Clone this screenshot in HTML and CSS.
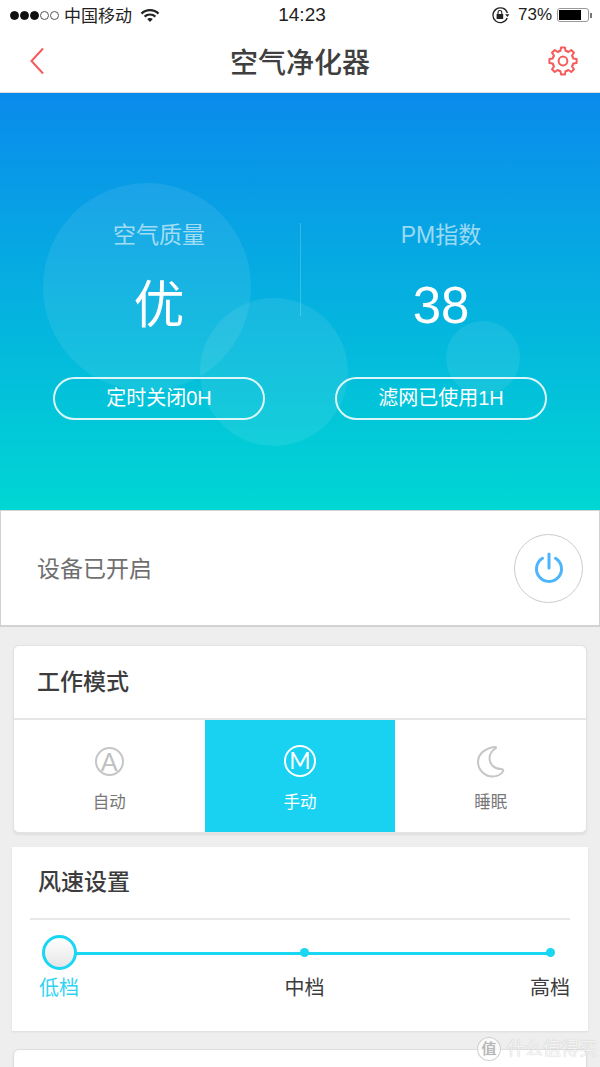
FILE: index.html
```html
<!DOCTYPE html>
<html lang="zh-CN">
<head>
  <meta charset="UTF-8">
  <title>空气净化器</title>
  <link rel="stylesheet" href="styles.css">
</head>
<body>
  <div class="status-bar">
    <div class="status-left">
      <span class="dots">
        <i class="dot on"></i><i class="dot on"></i><i class="dot on"></i><i class="dot"></i><i class="dot"></i>
      </span>
      <span class="carrier">中国移动</span>
      <svg class="wifi" width="20" height="15" viewBox="0 0 20 15">
        <path d="M1.5 5.6C6.2 1 13.8 1 18.5 5.6M4.6 8.6C7.6 5.8 12.4 5.8 15.4 8.6" fill="none" stroke="#222" stroke-width="2.2"/>
        <path d="M7.2 11 C8.8 9.7 11.2 9.7 12.8 11 L10 14 Z" fill="#222"/>
      </svg>
    </div>
    <div class="clock">14:23</div>
    <div class="status-right">
      <svg class="lock" width="19" height="18" viewBox="0 0 19 18">
        <path d="M16.4 7A7.4 7.4 0 1 0 16.2 12" fill="none" stroke="#222" stroke-width="1.3"/>
        <path d="M14.2 8.2H18.4L16.3 11Z" fill="#222"/>
        <rect x="5.6" y="8" width="6.6" height="5" rx="0.6" fill="#222"/>
        <path d="M7 8V6.4a1.9 1.9 0 0 1 3.8 0V8" fill="none" stroke="#222" stroke-width="1.1"/>
      </svg>
      <span class="battery-pct">73%</span>
      <span class="battery"><span class="battery-fill"></span></span>
      <span class="battery-nub"></span>
    </div>
  </div>

  <div class="nav">
    <svg class="back" width="14" height="28" viewBox="0 0 14 28">
      <path d="M13 1.5L1.5 14L13 26.5" fill="none" stroke="#f65b5b" stroke-width="2"/>
    </svg>
    <div class="nav-title">空气净化器</div>
    <svg class="gear" width="30" height="30" viewBox="-15 -15 30 30">
      <defs>
        <path id="tooth" d="M-4.02 -9.7L-2.54 -10.19L-1.95 -13.6H1.95L2.54 -10.19L4.02 -9.7"/>
      </defs>
      <g fill="none" stroke="#f65b5b" stroke-width="2" stroke-linejoin="round" stroke-linecap="round">
        <use href="#tooth"/>
        <use href="#tooth" transform="rotate(45)"/>
        <use href="#tooth" transform="rotate(90)"/>
        <use href="#tooth" transform="rotate(135)"/>
        <use href="#tooth" transform="rotate(180)"/>
        <use href="#tooth" transform="rotate(225)"/>
        <use href="#tooth" transform="rotate(270)"/>
        <use href="#tooth" transform="rotate(315)"/>
        <circle r="4.4"/>
      </g>
    </svg>
  </div>

  <div class="hero">
    <div class="bubble bubble-big"></div>
    <div class="bubble bubble-mid"></div>
    <div class="bubble bubble-small"></div>
    <div class="hero-line"></div>
    <div class="hero-col">
      <div class="hero-label">空气质量</div>
      <div class="hero-value">优</div>
      <div class="pill">定时关闭0H</div>
    </div>
    <div class="hero-col">
      <div class="hero-label">PM指数</div>
      <div class="hero-value">38</div>
      <div class="pill">滤网已使用1H</div>
    </div>
  </div>

  <div class="power-row">
    <div class="power-text">设备已开启</div>
    <div class="power-btn">
      <svg width="32" height="34" viewBox="0 0 32 34">
        <path d="M9.5 7.3A12.5 12.5 0 1 0 22.5 7.3M16 3V17" fill="none" stroke="#4db5fb" stroke-width="3" stroke-linecap="round"/>
      </svg>
    </div>
  </div>

  <div class="card card-mode">
    <div class="card-title mode-title">工作模式</div>
    <div class="modes">
      <div class="mode">
        <div class="mode-icon"><span class="letter">A</span></div>
        <div class="mode-name">自动</div>
      </div>
      <div class="mode active">
        <div class="mode-icon"><span class="letter">M</span></div>
        <div class="mode-name">手动</div>
      </div>
      <div class="mode">
        <div class="mode-icon">
          <svg width="29" height="33" viewBox="0 0 29 33">
            <path d="M19 2C9 3 2 9 2 17C2 25 9 31.500 16.500 31.500C21 31.500 25 29.500 27 26.500C27.800 25 26.500 24 25 24C18.500 24 13.500 19.500 13.500 13C13.500 9 15.500 6 19.500 3.500C20.500 2.800 20 2 19 2Z" fill="none" stroke="#c6c6c6" stroke-width="2"/>
          </svg>
        </div>
        <div class="mode-name">睡眠</div>
      </div>
    </div>
  </div>

  <div class="card card-wind">
    <div class="card-title wind-title">风速设置</div>
    <div class="slider">
      <div class="slider-track"></div>
      <div class="stop current">
        <div class="stop-mark"><span class="knob"></span></div>
        <div class="stop-name">低档</div>
      </div>
      <div class="stop">
        <div class="stop-mark"><span class="stop-dot"></span></div>
        <div class="stop-name">中档</div>
      </div>
      <div class="stop">
        <div class="stop-mark"><span class="stop-dot"></span></div>
        <div class="stop-name">高档</div>
      </div>
    </div>
  </div>

  <div class="card card-next"></div>

  <div class="watermark">
    <span class="watermark-badge">值</span>
    <span class="watermark-text">什么值得买</span>
  </div>
</body>
</html>
```

FILE: styles.css
```css
html, body {
  height: 1067px;
}

body {
  margin: 0;
  position: relative;
  overflow: hidden;
  background: #eeeeee;
  color: #3c3c3c;
  font-family: "Liberation Sans", "Noto Sans CJK SC", sans-serif;
}

.status-bar {
  display: grid;
  grid-template-columns: 1fr auto 1fr;
  align-items: center;
  height: 30px;
  background: #fff;
  color: #222;
}

.status-left {
  display: flex;
  align-items: center;
  padding-left: 10px;
}

.dots {
  display: flex;
  gap: 1px;
}

.dot {
  box-sizing: border-box;
  width: 9px;
  height: 9px;
  border: 1px solid #555;
  border-radius: 50%;
}

.dot.on {
  background: #111;
  border-color: #111;
}

.carrier {
  margin-left: 5px;
  margin-bottom: 1px;
  font-size: 17px;
}

.wifi {
  margin-left: 8px;
}

.clock {
  font-size: 19px;
  padding-left: 4px;
}

.status-right {
  display: flex;
  align-items: center;
  justify-content: flex-end;
  padding-right: 8px;
}

.battery-pct {
  margin-left: 8px;
  font-size: 17px;
}

.battery {
  box-sizing: border-box;
  display: block;
  width: 32px;
  height: 14px;
  margin-left: 5px;
  padding: 1px;
  border: 1px solid #999;
  border-radius: 3px;
}

.battery-fill {
  display: block;
  width: 22px;
  height: 10px;
  background: #000;
}

.battery-nub {
  width: 2px;
  height: 5px;
  margin-left: 1px;
  background: #777;
}

.nav {
  display: grid;
  grid-template-columns: 1fr auto 1fr;
  align-items: center;
  height: 62px;
  padding: 0 22px 0 30px;
  background: #fff;
  border-bottom: 1px solid #dcdcdc;
}

.nav-title {
  font-size: 28px;
  font-weight: 500;
  color: #3f3f3f;
  padding-right: 8px;
}

.gear {
  justify-self: end;
}

.hero {
  position: relative;
  display: grid;
  grid-template-columns: 1fr 1fr;
  box-sizing: border-box;
  height: 417px;
  padding: 126px 18px 0;
  background: linear-gradient(180deg, #0a8bec 0%, #00d7d3 100%);
  overflow: hidden;
}

.bubble {
  position: absolute;
  border-radius: 50%;
  background: rgba(255, 255, 255, 0.08);
}

.bubble-big {
  left: 43px;
  top: 90px;
  width: 208px;
  height: 208px;
}

.bubble-mid {
  left: 200px;
  top: 205px;
  width: 148px;
  height: 148px;
}

.bubble-small {
  left: 446px;
  top: 228px;
  width: 74px;
  height: 74px;
}

.hero-line {
  position: absolute;
  left: 300px;
  top: 130px;
  width: 1px;
  height: 93px;
  background: rgba(255, 255, 255, 0.2);
}

.hero-col {
  position: relative;
  display: flex;
  flex-direction: column;
  align-items: center;
  color: #fff;
}

.hero-label {
  font-size: 23px;
  line-height: 32px;
  color: rgba(255, 255, 255, 0.6);
}

.hero-value {
  margin-top: 20px;
  font-size: 51px;
  line-height: 70px;
}

.pill {
  box-sizing: border-box;
  width: 212px;
  height: 43px;
  margin-top: 36px;
  border: 2px solid rgba(255, 255, 255, 0.85);
  border-radius: 22px;
  font-size: 20px;
  line-height: 39px;
  text-align: center;
}

.power-row {
  box-sizing: border-box;
  display: flex;
  align-items: center;
  justify-content: space-between;
  height: 117px;
  padding: 0 16px 0 36px;
  background: #fff;
  border: 2px solid #d2d2d2;
  border-width: 1px 1px 2px;
}

.power-text {
  margin-bottom: 2px;
  font-size: 23px;
  color: #6f6f6f;
}

.power-btn {
  box-sizing: border-box;
  display: flex;
  align-items: center;
  justify-content: center;
  width: 69px;
  height: 69px;
  border: 1px solid #cbcbcb;
  border-radius: 50%;
}

.card {
  background: #fff;
  box-shadow: 0 1px 2px #dcdcdc;
}

.card-title {
  font-size: 23px;
  font-weight: 500;
  color: #3c3c3c;
}

.card-mode {
  margin: 18px 13px 0;
  border: 1px solid #e2e2e2;
  border-bottom-width: 2px;
  border-radius: 6px;
  overflow: hidden;
}

.mode-title {
  height: 74px;
  padding-left: 23px;
  line-height: 72px;
  border-bottom: 2px solid #e6e6e6;
  box-sizing: border-box;
}

.modes {
  display: grid;
  grid-template-columns: 1fr 1fr 1fr;
  height: 112px;
}

.mode {
  display: flex;
  flex-direction: column;
  align-items: center;
  padding-top: 25px;
  box-sizing: border-box;
  color: #777;
}

.mode.active {
  background: #19d1f0;
  color: #fff;
}

.mode-icon {
  display: flex;
  align-items: center;
  justify-content: center;
  height: 32px;
}

.letter {
  box-sizing: border-box;
  width: 29px;
  height: 29px;
  border: 2px solid #c6c6c6;
  border-radius: 50%;
  color: #c0c0c0;
  font-family: Lato, sans-serif;
  font-size: 25px;
  line-height: 25px;
  text-align: center;
}

.active .letter {
  width: 32px;
  height: 32px;
  border-color: #fff;
  color: #fff;
  font-size: 23px;
  line-height: 27px;
}

.mode-name {
  margin-top: 13px;
  font-size: 16.5px;
  line-height: 24px;
}

.card-wind {
  height: 184px;
  margin: 13px 12px 0;
  padding: 0 18px;
}

.wind-title {
  height: 71px;
  padding-left: 8px;
  line-height: 70px;
  border-bottom: 2px solid #e8e8e8;
}

.slider {
  position: relative;
  display: flex;
  justify-content: space-between;
  padding: 14px 0 0 9px;
}

.slider-track {
  position: absolute;
  left: 29px;
  right: 20px;
  top: 32px;
  height: 3px;
  background: #19d6f3;
}

.stop {
  position: relative;
  display: flex;
  flex-direction: column;
  align-items: center;
  width: 40px;
  color: #3c3c3c;
}

.stop.current {
  color: #2fd3f2;
}

.stop-mark {
  display: flex;
  align-items: center;
  justify-content: center;
  height: 36px;
}

.knob {
  box-sizing: border-box;
  width: 35px;
  height: 35px;
  border: 3px solid #19d6f3;
  border-radius: 50%;
  background: linear-gradient(180deg, #fff 0%, #e6e6e6 100%);
}

.stop-dot {
  width: 9px;
  height: 9px;
  border-radius: 50%;
  background: #19d6f3;
}

.stop-name {
  margin-top: 3px;
  font-size: 20px;
  line-height: 30px;
  white-space: nowrap;
}

.card-next {
  height: 60px;
  margin: 18px 13px 0;
  border: 1px solid #dedede;
  border-radius: 6px;
}

.watermark {
  position: absolute;
  left: 477px;
  top: 1037px;
  display: flex;
  align-items: center;
  color: rgba(255, 255, 255, 0.85);
  text-shadow: 0 0 1px rgba(120, 120, 120, 0.5);
}

.watermark-badge {
  box-sizing: border-box;
  width: 24px;
  height: 24px;
  border: 1px solid rgba(190, 190, 190, 0.7);
  border-radius: 50%;
  background: rgba(255, 255, 255, 0.7);
  color: #b5b5b5;
  font-size: 15px;
  line-height: 21px;
  text-align: center;
}

.watermark-text {
  margin-left: 6px;
  font-size: 18px;
  line-height: 24px;
}
```
